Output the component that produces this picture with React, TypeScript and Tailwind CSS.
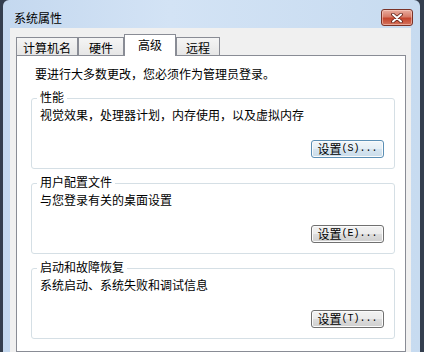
const cjk = { fontFamily: '"Noto Sans CJK SC", "Noto Sans", sans-serif' };

const tabs = [
  { label: '计算机名', w: 'w-[62px]' },
  { label: '硬件', w: 'w-[46px]' },
  { label: '高级', w: 'w-[52px]', active: true },
  { label: '远程', w: 'w-[44px]' },
];

const groups = [
  { title: '性能', text: '视觉效果，处理器计划，内存使用，以及虚拟内存', key: 'S', focused: true },
  { title: '用户配置文件', text: '与您登录有关的桌面设置', key: 'E' },
  { title: '启动和故障恢复', text: '系统启动、系统失败和调试信息', key: 'T' },
];

function SettingsButton({ hotkey, focused }: { hotkey: string; focused?: boolean }) {
  return (
    <button
      className={`flex items-center justify-center w-[73px] h-[18px] rounded-[3px] border text-[12px] leading-[14px] text-black shadow-[inset_0_0_0_1px_#fbfbfb] ${
        focused
          ? 'border-[#5b8fb5] bg-[linear-gradient(#f1f6fa,#e4eef5_50%,#d6e5f0_50%,#c9dcea)]'
          : 'border-[#707070] bg-[linear-gradient(#f2f2f2,#ebebeb_50%,#dddddd_50%,#cfcfcf)]'
      }`}
    >
      <span style={cjk}>设置</span>
      <span className="text-[10px]" style={{ fontFamily: '"Liberation Mono", monospace' }}>
        ({hotkey})...
      </span>
    </button>
  );
}

export default function App() {
  return (
    <div className="w-[424px] h-[352px] overflow-hidden flex bg-[#343e4e]" style={cjk}>
      <div className="w-[3px] shrink-0" />

      {/* Window frame */}
      <div className="w-[417px] shrink-0 flex flex-col rounded-tl-[6px] rounded-tr-[6px] bg-[linear-gradient(90deg,#c4d8ef,#d3e3f5_40%,#c7dbf0)]">
        {/* Title bar */}
        <div className="h-[28px] shrink-0 flex items-start justify-between pl-[11px] pr-[7px]">
          <span className="mt-[11px] text-[12px] leading-[14px] text-black">系统属性</span>
          <div className="mt-[9px] w-[32px] h-[17px] rounded-[3px] border border-[#7a3328] flex items-center justify-center bg-[linear-gradient(#e9ad9f,#d77b67_45%,#c4452d_55%,#d4735d)] shadow-[inset_0_0_0_1px_rgba(255,220,210,0.5)]">
            <svg width="12" height="10" viewBox="0 0 12 10">
              <path d="M2 1.5 L10 8.5 M10 1.5 L2 8.5" stroke="#5c1d14" strokeWidth="3.6" strokeLinecap="round" />
              <path d="M2 1.5 L10 8.5 M10 1.5 L2 8.5" stroke="#ffffff" strokeWidth="2" strokeLinecap="round" />
            </svg>
          </div>
        </div>

        {/* Client area */}
        <div className="flex-1 ml-[7px] mr-[9px] bg-[#f0f0f0] pt-[6px] pl-[6px] pr-[5px] flex flex-col">
          {/* Tabs */}
          <div className="flex items-end h-[21px]">
            {tabs.map((t) =>
              t.active ? (
                <div
                  key={t.label}
                  className={`${t.w} h-[22px] mb-[-1px] relative z-10 bg-white border border-b-0 border-[#898c95] pt-[3px] text-center text-[12px] leading-[14px] text-black`}
                >
                  {t.label}
                </div>
              ) : (
                <div
                  key={t.label}
                  className={`${t.w} h-[18px] bg-[linear-gradient(#f5f5f5,#e6e6e6)] border border-b-0 border-[#898c95] pt-[3px] text-center text-[12px] leading-[14px] text-black`}
                >
                  {t.label}
                </div>
              )
            )}
          </div>

          {/* Tab page */}
          <div className="w-[390px] flex-1 bg-white border border-[#898c95] pt-[11px] pl-[14px] pr-[10px]">
            <p className="pl-[4px] text-[12px] leading-[14px] text-black">要进行大多数更改，您必须作为管理员登录。</p>

            <div className="mt-[17px] flex flex-col gap-[14px]">
              {groups.map((g) => (
                <div
                  key={g.title}
                  className="relative h-[71px] rounded-[3px] border border-[#d5dfe5] pt-[9px] pl-[8px] pr-[10px] pb-[10px]"
                >
                  <span className="absolute top-[-9px] left-[5px] bg-white px-[3px] text-[12px] leading-[14px] text-black">
                    {g.title}
                  </span>
                  <p className="text-[12px] leading-[14px] text-black">{g.text}</p>
                  <div className="mt-[18px] flex justify-end">
                    <SettingsButton hotkey={g.key} focused={g.focused} />
                  </div>
                </div>
              ))}
            </div>
          </div>
        </div>
      </div>

      <div className="w-[4px] shrink-0" />
    </div>
  );
}
